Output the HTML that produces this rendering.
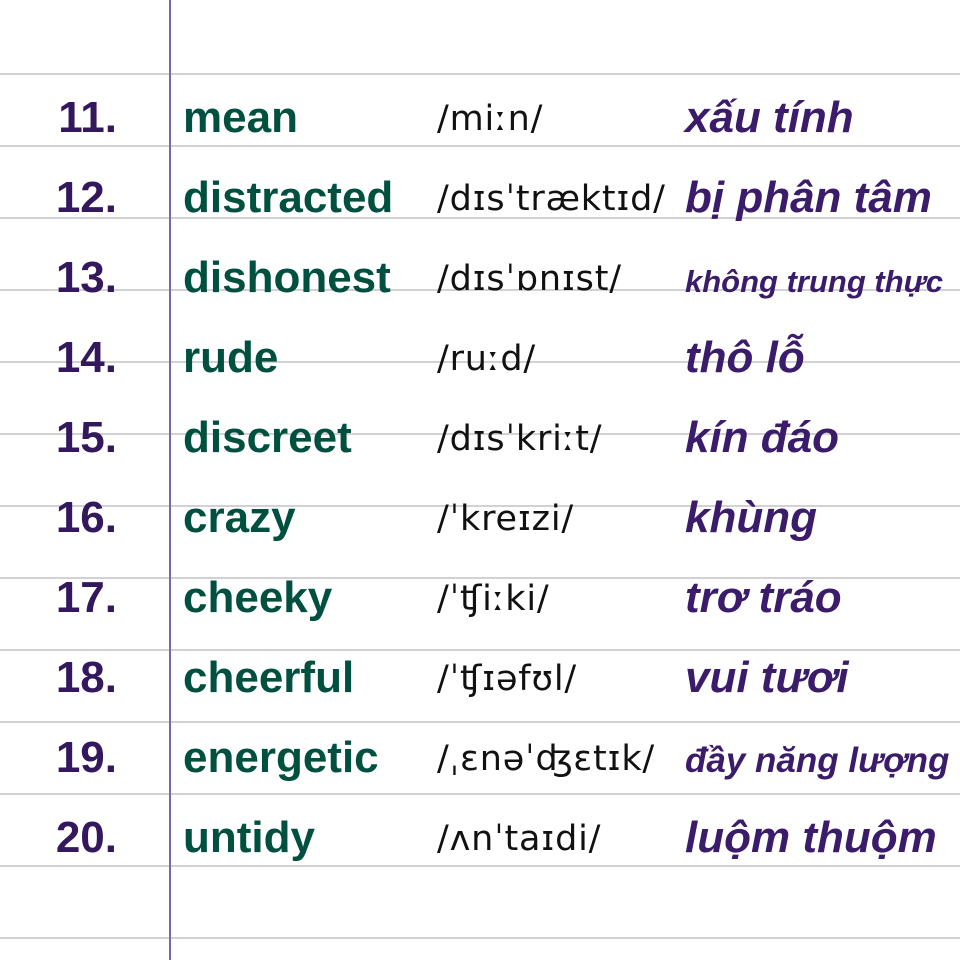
<!DOCTYPE html>
<html><head><meta charset="utf-8"><style>
body{margin:0;width:960px;height:960px;background:#fff;position:relative;overflow:hidden;font-family:"Liberation Sans","DejaVu Sans",sans-serif}
.h{position:absolute;left:0;width:960px;height:2px;background:#d2d2d6}
.v{position:absolute;left:169px;top:0;width:2px;height:960px;background:#7b66a3}
.r{position:absolute;left:0;width:960px;height:50px}
.n{position:absolute;right:843px;font-weight:bold;font-size:44px;color:#34185e;bottom:0;line-height:1}
.w{position:absolute;left:183px;font-weight:bold;font-size:44px;color:#00503f;bottom:0;line-height:1}
.p{position:absolute;left:437px;font-size:35px;color:#111;bottom:3px;line-height:1;font-family:"DejaVu Sans",sans-serif;letter-spacing:0.8px}
.m{position:absolute;left:685px;font-weight:bold;font-style:italic;font-size:44px;color:#3b1c6b;bottom:0;line-height:1}
</style></head><body>
<div class="h" style="top:73px"></div><div class="h" style="top:145px"></div><div class="h" style="top:217px"></div><div class="h" style="top:289px"></div><div class="h" style="top:361px"></div><div class="h" style="top:433px"></div><div class="h" style="top:505px"></div><div class="h" style="top:577px"></div><div class="h" style="top:649px"></div><div class="h" style="top:721px"></div><div class="h" style="top:793px"></div><div class="h" style="top:865px"></div><div class="h" style="top:937px"></div>
<div class="v"></div>
<div class="r" style="top:90px"><span class="n">11.</span><span class="w">mean</span><span class="p">/miːn/</span><span class="m">xấu tính</span></div>
<div class="r" style="top:170px"><span class="n">12.</span><span class="w">distracted</span><span class="p">/dɪsˈtræktɪd/</span><span class="m">bị phân tâm</span></div>
<div class="r" style="top:250px"><span class="n">13.</span><span class="w">dishonest</span><span class="p">/dɪsˈɒnɪst/</span><span class="m" style="font-size:31px;bottom:3px">không trung thực</span></div>
<div class="r" style="top:330px"><span class="n">14.</span><span class="w">rude</span><span class="p">/ruːd/</span><span class="m">thô lỗ</span></div>
<div class="r" style="top:410px"><span class="n">15.</span><span class="w">discreet</span><span class="p">/dɪsˈkriːt/</span><span class="m">kín đáo</span></div>
<div class="r" style="top:490px"><span class="n">16.</span><span class="w">crazy</span><span class="p">/ˈkreɪzi/</span><span class="m">khùng</span></div>
<div class="r" style="top:570px"><span class="n">17.</span><span class="w">cheeky</span><span class="p">/ˈʧiːki/</span><span class="m">trơ tráo</span></div>
<div class="r" style="top:650px"><span class="n">18.</span><span class="w">cheerful</span><span class="p">/ˈʧɪəfʊl/</span><span class="m">vui tươi</span></div>
<div class="r" style="top:730px"><span class="n">19.</span><span class="w">energetic</span><span class="p">/ˌɛnəˈʤɛtɪk/</span><span class="m" style="font-size:35px;bottom:2px">đầy năng lượng</span></div>
<div class="r" style="top:810px"><span class="n">20.</span><span class="w">untidy</span><span class="p">/ʌnˈtaɪdi/</span><span class="m">luộm thuộm</span></div>
</body></html>
